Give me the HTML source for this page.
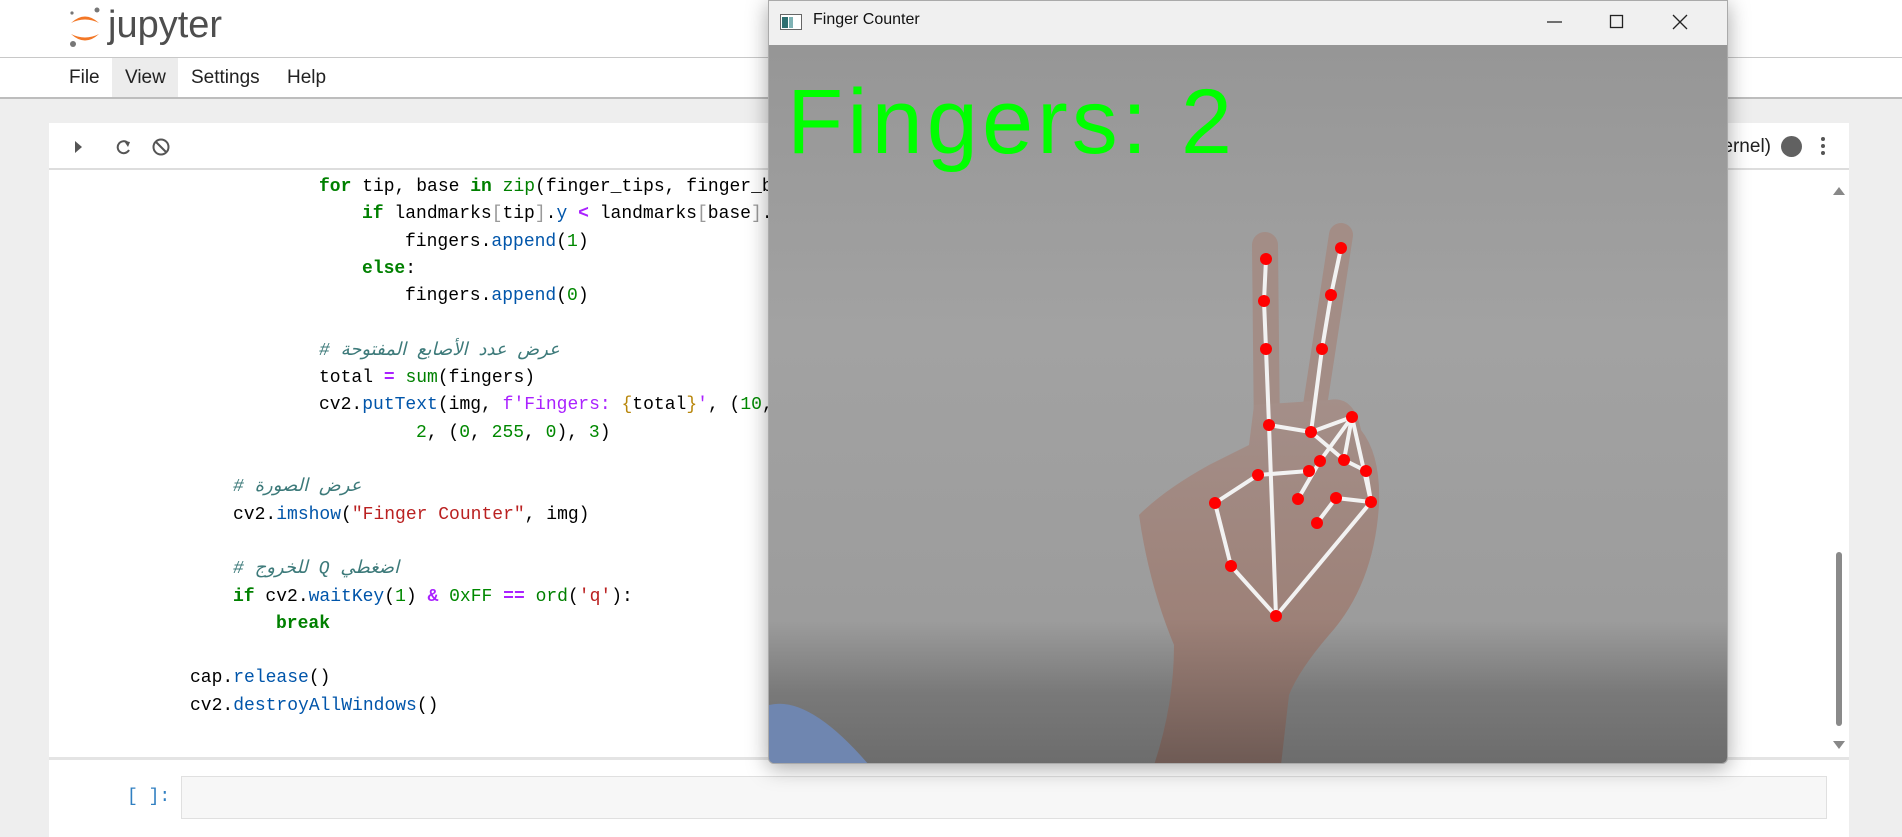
<!DOCTYPE html>
<html><head><meta charset="utf-8"><style>
*{margin:0;padding:0;box-sizing:border-box}
body{width:1902px;height:837px;overflow:hidden;background:#eeeeee;font-family:"Liberation Sans",sans-serif;position:relative}
.hdr{position:absolute;left:0;top:0;width:1902px;height:58px;background:#fff;border-bottom:1px solid #c8c8c8}
.menu{position:absolute;left:0;top:58px;width:1902px;height:41px;background:#fff;border-bottom:2px solid #bdbdbd;font-size:19px;color:#222}
.menu span{position:absolute;top:0;height:39px;line-height:39px}
.panel{position:absolute;left:49px;top:123px;width:1800px;height:714px;background:#fff}
.tb{position:absolute;left:0;top:0;width:1800px;height:47px;border-bottom:2px solid #ddd}
.code{position:absolute;left:0;top:174px;font-family:"Liberation Mono",monospace;font-size:18px;color:#000;white-space:pre}
.code div{position:absolute;height:27px;line-height:27px}
.k{color:#008000;font-weight:bold}.b{color:#008000}.f{color:#0055aa}.n{color:#008800}.s{color:#ba2121}.o{color:#aa22ff;font-weight:bold}.c{color:#3d7a7a;font-style:italic;font-family:"Liberation Mono","DejaVu Sans",monospace}.br{color:#999}.p{color:#aa22ff}
.win{position:absolute;left:768px;top:0;width:960px;height:764px;background:#f0f0f0;box-shadow:0 4px 22px rgba(0,0,0,.35);border:1px solid #aaa;border-radius:0 0 6px 6px;overflow:hidden}
</style></head><body>
<div class="hdr">
<svg style="position:absolute;left:68px;top:6px" width="36" height="44" viewBox="0 0 36 44">
<path d="M3 17 Q17 4 31 17 Q17 10 3 17Z" fill="#f37726"/>
<path d="M3 28 Q17 41 31 28 Q17 35 3 28Z" fill="#f37726"/>
<circle cx="29" cy="4" r="2.5" fill="#777"/><circle cx="5" cy="38" r="3" fill="#777"/><circle cx="4" cy="7" r="1.6" fill="#777"/>
</svg>
<span style="position:absolute;left:108px;top:4px;font-size:38px;line-height:42px;color:#4e4e4e">jupyter</span>
</div>
<div class="menu">
<span style="left:69px">File</span>
<span style="left:112px;width:66px;background:#ececec;padding-left:13px">View</span>
<span style="left:191px">Settings</span>
<span style="left:287px">Help</span>
</div>
<div class="panel">
<div class="tb">
<svg style="position:absolute;left:20px;top:14px" width="110" height="20" viewBox="0 0 110 20">
<path d="M6 4 L13 10 L6 16Z" fill="#555"/>
<path d="M59 6 A6 6 0 1 0 60 13" fill="none" stroke="#555" stroke-width="2"/><path d="M55 4 L61 5 L59 10Z" fill="#555"/>
<circle cx="92" cy="10" r="7.5" fill="none" stroke="#555" stroke-width="2"/><path d="M87 5 L97 15" stroke="#555" stroke-width="2"/>
</svg>
<span style="position:absolute;right:78px;top:13px;font-size:19px;color:#222;white-space:nowrap">(Python Kernel)</span>
<div style="position:absolute;left:1732px;top:13px;width:21px;height:21px;border-radius:50%;background:#616161"></div>
<div style="position:absolute;left:1772px;top:14px;width:4px;height:4px;border-radius:50%;background:#555;box-shadow:0 7px 0 #555,0 14px 0 #555"></div>
</div>
<svg style="position:absolute;left:1780px;top:60px" width="20" height="575"><path d="M4 12 L10 4 L16 12Z" fill="#888"/><path d="M4 558 L10 566 L16 558Z" fill="#888"/><rect x="7" y="369" width="6" height="174" rx="3" fill="#8a8a8a"/></svg>
<div style="position:absolute;left:0;top:634px;width:1800px;height:3px;background:#e4e4e4"></div>
<div style="position:absolute;left:78px;top:664px;font-family:'Liberation Mono',monospace;font-size:18px;color:#307fc1">[ ]:</div>
<div style="position:absolute;left:132px;top:653px;width:1646px;height:43px;background:#f7f7f7;border:1px solid #e0e0e0"></div>
</div>
<div class="code" style="left:0">
<div style="left:319px;top:0px"><span class="k">for</span> tip, base <span class="k">in</span> <span class="b">zip</span>(finger_tips, finger_bases):</div>
<div style="left:362px;top:27px"><span class="k">if</span> landmarks<span class="br">[</span>tip<span class="br">]</span>.<span class="f">y</span> <span class="o">&lt;</span> landmarks<span class="br">[</span>base<span class="br">]</span>.y:</div>
<div style="left:405px;top:55px">fingers.<span class="f">append</span>(<span class="n">1</span>)</div>
<div style="left:362px;top:82px"><span class="k">else</span>:</div>
<div style="left:405px;top:109px">fingers.<span class="f">append</span>(<span class="n">0</span>)</div>
<div style="left:319px;top:164px" class="c"># عرض عدد الأصابع المفتوحة</div>
<div style="left:319px;top:191px">total <span class="o">=</span> <span class="b">sum</span>(fingers)</div>
<div style="left:319px;top:218px">cv2.<span class="f">putText</span>(img, <span class="p">f'Fingers: </span><span style="color:#b8860b">{</span>total<span style="color:#b8860b">}</span><span class="p">'</span>, (<span class="n">10</span>, <span class="n">70</span>),</div>
<div style="left:416px;top:246px"><span class="n">2</span>, (<span class="n">0</span>, <span class="n">255</span>, <span class="n">0</span>), <span class="n">3</span>)</div>
<div style="left:233px;top:300px" class="c"># عرض الصورة</div>
<div style="left:233px;top:328px">cv2.<span class="f">imshow</span>(<span class="s">"Finger Counter"</span>, img)</div>
<div style="left:233px;top:382px" class="c"># للخروج Q اضغطي</div>
<div style="left:233px;top:410px"><span class="k">if</span> cv2.<span class="f">waitKey</span>(<span class="n">1</span>) <span class="o">&amp;</span> <span class="n">0xFF</span> <span class="o">==</span> <span class="b">ord</span>(<span class="s">'q'</span>):</div>
<div style="left:276px;top:437px"><span class="k">break</span></div>
<div style="left:190px;top:491px">cap.<span class="f">release</span>()</div>
<div style="left:190px;top:519px">cv2.<span class="f">destroyAllWindows</span>()</div>
</div>
<div class="win">
<svg style="position:absolute;left:11px;top:13px" width="22" height="16"><rect x="0.5" y="0.5" width="21" height="15" fill="#fff" stroke="#666"/><rect x="2" y="3" width="6" height="11" fill="#2e6f70"/><rect x="9" y="3" width="4" height="11" fill="#7fb2b4"/></svg>
<span style="position:absolute;left:44px;top:10px;font-size:16px;color:#111">Finger Counter</span>
<svg style="position:absolute;left:775px;top:10px" width="150" height="22"><path d="M3 11 H18" stroke="#222" stroke-width="1.3"/><rect x="66.5" y="4.5" width="12" height="12" fill="none" stroke="#222" stroke-width="1.3"/><path d="M129 4 L143 18 M143 4 L129 18" stroke="#222" stroke-width="1.3"/></svg>
<svg style="position:absolute;left:0;top:44px" width="960" height="720" viewBox="0 0 960 720">
<defs><linearGradient id="g" x1="0" y1="0" x2="0" y2="1"><stop offset="0" stop-color="#969696"/><stop offset=".4" stop-color="#a2a2a2"/><stop offset=".8" stop-color="#9c9c9c"/><stop offset=".9" stop-color="#797979"/><stop offset="1" stop-color="#6c6c6c"/></linearGradient>
<linearGradient id="sk" x1="0" y1="0" x2="0" y2="1"><stop offset="0" stop-color="#a48f89"/><stop offset=".6" stop-color="#9d8178"/><stop offset="1" stop-color="#6e5a54"/></linearGradient></defs>
<rect width="960" height="720" fill="url(#g)"/>
<path d="M0 660 Q40 650 100 720 L0 720Z" fill="#6f86b0"/>
<g fill="url(#sk)">
<line x1="498" y1="395" x2="496" y2="200" stroke="#a38d86" stroke-width="26" stroke-linecap="round"/>
<line x1="540" y1="400" x2="572" y2="190" stroke="#a38d86" stroke-width="24" stroke-linecap="round"/>
<path d="M485 360 L560 355 Q585 350 592 385 Q612 410 610 460 Q605 540 560 590 Q530 625 520 650 L512 720 L385 720 Q405 660 405 600 Q380 540 370 470 Q395 445 440 420 L480 400Z"/>
</g>
<g stroke="#f2f2f2" stroke-width="4" fill="none" stroke-linecap="round">
<polyline points="507,571 462,521 446,458 489,430 540,426"/>
<polyline points="507,571 500,380 497,304 495,256 497,214"/>
<polyline points="500,380 542,387 553,304 562,250 572,203"/>
<polyline points="542,387 583,372 602,457 507,571"/>
<polyline points="542,387 575,415 597,426 602,457"/>
<polyline points="583,372 575,415"/>
<polyline points="583,372 551,416 529,454"/>
<polyline points="602,457 567,453 548,478"/>
</g>
<g fill="#f00">
<circle cx="507" cy="571" r="6"/><circle cx="462" cy="521" r="6"/><circle cx="446" cy="458" r="6"/><circle cx="489" cy="430" r="6"/><circle cx="540" cy="426" r="6"/>
<circle cx="500" cy="380" r="6"/><circle cx="497" cy="304" r="6"/><circle cx="495" cy="256" r="6"/><circle cx="497" cy="214" r="6"/>
<circle cx="542" cy="387" r="6"/><circle cx="553" cy="304" r="6"/><circle cx="562" cy="250" r="6"/><circle cx="572" cy="203" r="6"/>
<circle cx="583" cy="372" r="6"/><circle cx="575" cy="415" r="6"/><circle cx="551" cy="416" r="6"/><circle cx="529" cy="454" r="6"/>
<circle cx="597" cy="426" r="6"/><circle cx="602" cy="457" r="6"/><circle cx="567" cy="453" r="6"/><circle cx="548" cy="478" r="6"/>
</g>
<text x="18" y="108" font-family="Liberation Sans, sans-serif" font-size="92" fill="#00ff00" letter-spacing="4">Fingers:  2</text>
</svg>
</div>
</body></html>
